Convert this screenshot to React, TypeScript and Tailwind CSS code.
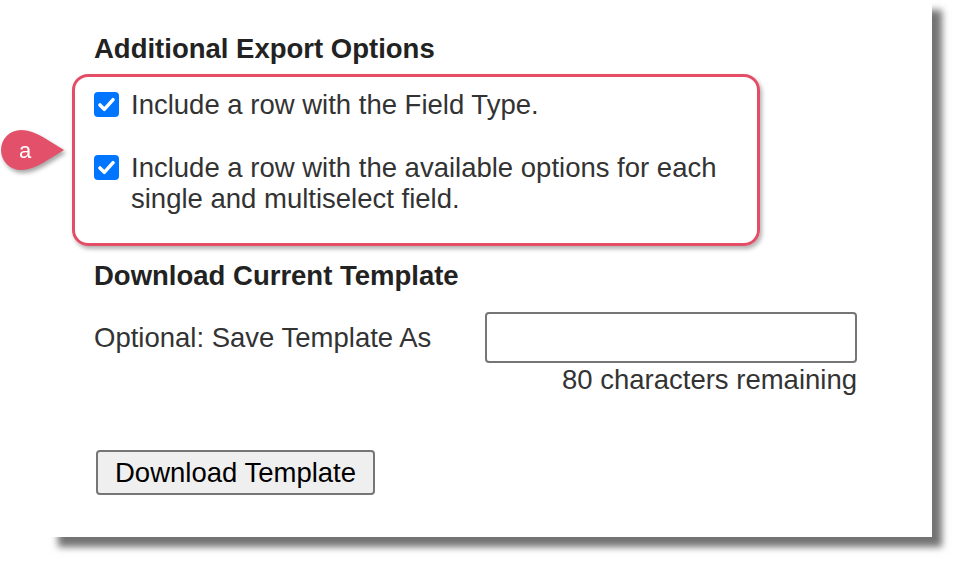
import React from 'react';

const CheckBox: React.FC = () => (
  <span className="mt-[3px] flex h-[25px] w-[25px] shrink-0 items-center justify-center rounded-[4px] bg-[#0075ff]">
    <svg viewBox="0 0 24 24" className="h-[21px] w-[21px]" fill="none">
      <path d="M4.5 12.5l5 5 10-11" stroke="#fff" strokeWidth="4" strokeLinecap="round" strokeLinejoin="round" />
    </svg>
  </span>
);

const Badge: React.FC = () => (
  <svg
    className="absolute left-0 top-[128px] h-[46px] w-[68px] drop-shadow-[2px_3px_2px_rgba(0,0,0,0.35)]"
    viewBox="0 0 68 46"
  >
    <path
      d="M21 2 A20 20 0 0 0 21 42 C36 42 50 30 64 22 C50 14 36 2 21 2 Z"
      fill="#e3506a"
    />
    <text x="25" y="30" textAnchor="middle" fill="#fff" fontSize="22" fontFamily="'Liberation Sans', Arial, sans-serif">
      a
    </text>
  </svg>
);

export default function App() {
  return (
    <div className="relative h-[561px] w-[955px] overflow-hidden bg-white font-['Liberation_Sans',Arial,sans-serif] text-[27.5px] leading-[31px] text-[#333]">
      <div className="ml-[48px] h-[537px] w-[884px] bg-white pl-[46px] pt-[33px] shadow-[10px_10px_7px_rgba(0,0,0,0.55)]">
        <h2 className="font-bold text-[#222]">Additional Export Options</h2>

        <div className="ml-[-22px] mt-[10px] w-[688px] rounded-[16px] border-[3px] border-[#e34d66] pb-[29px] pl-[19px] pt-[12px] shadow-[2px_3px_4px_rgba(0,0,0,0.3)]">
          <label className="flex items-start gap-[12px]">
            <CheckBox />
            <span>Include a row with the Field Type.</span>
          </label>
          <label className="mt-[32px] flex items-start gap-[12px]">
            <CheckBox />
            <span className="w-[600px]">Include a row with the available options for each single and multiselect field.</span>
          </label>
        </div>

        <h2 className="mt-[14px] font-bold text-[#222]">Download Current Template</h2>

        <div className="mt-[21px] flex w-[763px] items-start justify-between">
          <span className="mt-[10px]">Optional: Save Template As</span>
          <div className="flex flex-col items-end">
            <input
              type="text"
              className="h-[51px] w-[372px] rounded-[4px] border-2 border-[#767676] bg-white px-2 outline-none"
            />
            <span className="mt-[1px]">80 characters remaining</span>
          </div>
        </div>

        <button className="ml-[2px] mt-[55px] h-[45px] rounded-[4px] border-2 border-[#767676] bg-[#efefef] px-[17px] leading-[31px] text-black">
          Download Template
        </button>
      </div>
      <Badge />
    </div>
  );
}
